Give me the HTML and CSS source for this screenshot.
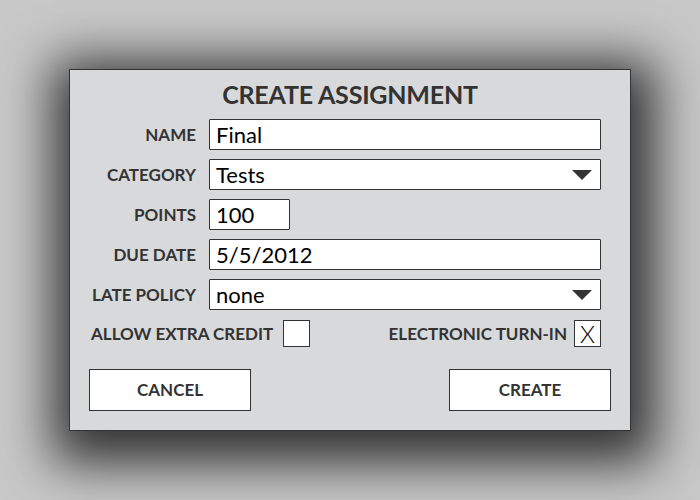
FILE: index.html
```html
<!DOCTYPE html>
<html>
<head>
<meta charset="utf-8">
<link rel="stylesheet" href="styles.css">
</head>
<body>
<div class="dialog">
  <h1 class="title">CREATE ASSIGNMENT</h1>
  <div class="form">
    <div class="label">NAME</div>
    <div class="field">Final</div>
    <div class="label">CATEGORY</div>
    <div class="field select">Tests<span class="arrow"></span></div>
    <div class="label">POINTS</div>
    <div class="field short">100</div>
    <div class="label">DUE DATE</div>
    <div class="field">5/5/2012</div>
    <div class="label">LATE POLICY</div>
    <div class="field select">none<span class="arrow"></span></div>
  </div>
  <div class="checks">
    <div class="check left"><span class="label">ALLOW EXTRA CREDIT</span><span class="box"></span></div>
    <div class="check right"><span class="label">ELECTRONIC TURN-IN</span><span class="box">X</span></div>
  </div>
  <div class="buttons">
    <div class="btn">CANCEL</div>
    <div class="btn">CREATE</div>
  </div>
</div>
</body>
</html>
```
FILE: styles.css
```css
html, body {
  margin: 0;
  padding: 0;
}
body {
  width: 700px;
  height: 500px;
  background: #c8c8c8;
  padding: 69px 0 0 69px;
  box-sizing: border-box;
  font-family: Lato, "Open Sans", sans-serif;
  color: #333;
  overflow: hidden;
}
.dialog {
  width: 562px;
  height: 362px;
  box-sizing: border-box;
  background: #d8d9db;
  border: 1px solid #333;
  box-shadow: 4px 12px 48px 20px rgba(0, 0, 0, 0.75);
}
.title {
  margin: 0;
  padding-top: 11px;
  height: 38px;
  font-size: 25px;
  line-height: 26px;
  font-weight: 700;
  text-align: center;
  color: #333;
  letter-spacing: -0.2px;
}
.form {
  display: grid;
  grid-template-columns: 126px 392px;
  column-gap: 13px;
  row-gap: 9px;
  grid-auto-rows: 31px;
}
.label {
  font-size: 17px;
  font-weight: 700;
  color: #333;
  text-align: right;
  align-self: center;
  white-space: nowrap;
}
.field {
  box-sizing: border-box;
  height: 31px;
  background: #fff;
  border: 1px solid #333;
  border-radius: 1px;
  font-size: 22px;
  line-height: 29px;
  padding-left: 6px;
  color: #000;
  position: relative;
}
.field.short {
  width: 81px;
}
.arrow {
  position: absolute;
  right: 8px;
  top: 10px;
  width: 0;
  height: 0;
  border-left: 10px solid transparent;
  border-right: 10px solid transparent;
  border-top: 10px solid #333;
}
.checks {
  display: flex;
  justify-content: space-between;
  align-items: center;
  padding: 0 29px 0 21px;
  margin-top: 10px;
  height: 27px;
}
.check {
  display: flex;
  align-items: center;
}
.check.left { gap: 10px; }
.check.right { gap: 7px; }
.box {
  box-sizing: border-box;
  width: 27px;
  height: 27px;
  background: #fff;
  border: 1px solid #333;
  font-size: 24px;
  font-weight: 300;
  line-height: 25px;
  text-align: center;
  color: #000;
}
.buttons {
  display: flex;
  justify-content: space-between;
  padding: 0 19px;
  margin-top: 22px;
}
.btn {
  box-sizing: border-box;
  width: 162px;
  height: 42px;
  background: #fff;
  border: 1px solid #333;
  font-size: 17px;
  font-weight: 700;
  line-height: 40px;
  text-align: center;
  color: #333;
}
```
